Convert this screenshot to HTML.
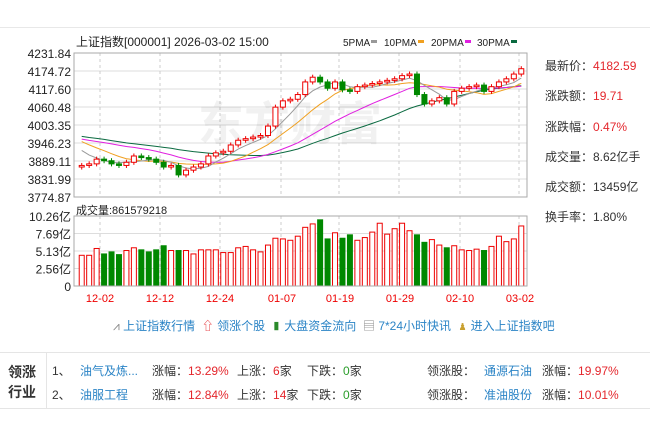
<!DOCTYPE html><html><head><meta charset="utf-8"><style>
body{margin:0;width:650px;height:427px;background:#fff;font-family:"Liberation Sans","Noto Sans CJK SC",sans-serif;overflow:hidden;position:relative}
.a{position:absolute;white-space:nowrap}
.r{color:#e4262c}.g{color:#2a9d2a}.b{color:#2b84c6}
</style></head><body>
<div class="a" style="left:0;top:27px;width:650px;border-top:1px solid #e8e8e8"></div>
<svg id="s" class="a" style="left:0;top:0" width="650" height="340" font-family="Liberation Sans,Noto Sans CJK SC,sans-serif"></svg>
<div class="a" style="left:545px;top:51px;font-size:12px;line-height:30.3px;color:#333">最新价：<span class="r">4182.59</span><br>涨跌额：<span class="r">19.71</span><br>涨跌幅：<span class="r">0.47%</span><br>成交量：8.62亿手<br>成交额：13459亿<br>换手率：1.80%</div>
<div class="a" style="left:113px;top:317px;font-size:12px;color:#2b84c6">
<span style="color:#888">⩘</span> 上证指数行情 &nbsp;<span style="color:#e4262c">⇧</span> 领涨个股 &nbsp;<span style="color:#2a8a2a">▮</span> 大盘资金流向 &nbsp;<span style="color:#888">▤</span> 7*24小时快讯 &nbsp;<span style="color:#c9a030">♟</span> 进入上证指数吧</div>
<div class="a" style="left:0;top:352px;width:650px;height:55px;border-top:1px solid #e5e5e5;border-bottom:1px solid #e5e5e5"></div>
<div class="a" style="left:46px;top:352px;height:56px;border-left:1px solid #e5e5e5"></div>
<div class="a" style="left:8px;top:362px;font-size:14px;font-weight:bold;line-height:20px;color:#333">领涨<br>行业</div>
<div class="a" style="left:52px;top:359px;font-size:12px;line-height:24px;color:#333">
<div><span class="a" style="left:0">1、</span><span class="a b" style="left:28px">油气及炼...</span><span class="a" style="left:100px">涨幅：<span class="r">13.29%</span></span><span class="a" style="left:185px">上涨：<span class="r">6</span>家</span><span class="a" style="left:255px">下跌：<span class="g">0</span>家</span><span class="a" style="left:375px">领涨股：</span><span class="a b" style="left:432px">通源石油</span><span class="a" style="left:490px">涨幅：<span class="r">19.97%</span></span></div>
<div style="position:relative;top:24px"><span class="a" style="left:0">2、</span><span class="a b" style="left:28px">油服工程</span><span class="a" style="left:100px">涨幅：<span class="r">12.84%</span></span><span class="a" style="left:185px">上涨：<span class="r">14</span>家</span><span class="a" style="left:255px">下跌：<span class="g">0</span>家</span><span class="a" style="left:375px">领涨股：</span><span class="a b" style="left:432px">准油股份</span><span class="a" style="left:490px">涨幅：<span class="r">10.01%</span></span></div>
</div>
<script>
var s=document.getElementById('s'),h='';
var L=74,R=527,T=53,B=197;
function py(p){return T+(4231.84-p)/456.97*144}
h+='<text x="76" y="46" font-size="12" fill="#222">上证指数[000001] 2026-03-02 15:00</text>';
h+='<text x="343" y="46" font-size="10" fill="#222">5PMA</text><rect x="371" y="40" width="6" height="3" fill="#999"/>';
h+='<text x="384" y="46" font-size="10" fill="#222">10PMA</text><rect x="418" y="40" width="6" height="3" fill="#f0a020"/>';
h+='<text x="431" y="46" font-size="10" fill="#222">20PMA</text><rect x="465" y="40" width="6" height="3" fill="#e020e0"/>';
h+='<text x="477" y="46" font-size="10" fill="#222">30PMA</text><rect x="511" y="40" width="6" height="3" fill="#0a6a40"/>';
var labs=['4231.84','4174.72','4117.60','4060.48','4003.35','3946.23','3889.11','3831.99','3774.87'];
for(var i=0;i<9;i++){var y=T+i*18;h+='<text x="71" y="'+(y+5)+'" font-size="12" text-anchor="end" fill="#222">'+labs[i]+'</text>';if(i>0&&i<8)h+='<line x1="'+L+'" x2="'+R+'" y1="'+y+'" y2="'+y+'" stroke="#ddd"/>';}
var vx=[100,160,220,281,339,399,460,519];
vx.forEach(function(x){h+='<line x1="'+x+'" x2="'+x+'" y1="'+T+'" y2="'+B+'" stroke="#ccc" stroke-dasharray="3,3"/>';h+='<line x1="'+x+'" x2="'+x+'" y1="216" y2="286" stroke="#ccc" stroke-dasharray="3,3"/>';});
h+='<text x="290" y="140" font-size="46" font-weight="bold" fill="#000" opacity="0.05" text-anchor="middle">东方财富</text>';
var c=[3875,3880,3895,3890,3880,3875,3885,3905,3900,3895,3885,3870,3875,3845,3860,3870,3880,3905,3915,3920,3940,3955,3960,3965,3970,4000,4060,4080,4085,4100,4140,4155,4140,4120,4140,4115,4110,4125,4130,4135,4140,4145,4150,4160,4165,4100,4070,4080,4090,4070,4110,4120,4125,4130,4110,4125,4140,4150,4165,4182];
var pre=[];for(var i=0;i<30;i++)pre.push(3975+Math.sin(i/3)*15-(i>22?(i-22)*8:0));
var all=pre.concat(c),n=c.length,dx=(R-L-6)/n;
function ma(k,i){var t=0;for(var j=0;j<k;j++)t+=all[30+i-j];return t/k}
var cols={5:'#999',10:'#f0a020',20:'#e020e0',30:'#0a6a40'};
[30,20,10,5].forEach(function(k){var p='';for(var i=0;i<n;i++){p+=(i?'L':'M')+(L+4+i*dx+dx/2).toFixed(1)+','+py(ma(k,i)).toFixed(1)}h+='<path d="'+p+'" fill="none" stroke="'+cols[k]+'" stroke-width="1"/>';});
for(var i=0;i<n;i++){var cl=c[i],op=i?all[29+i]:3870;var x=L+4+i*dx+dx/2;var up=cl>=op;var hi=Math.max(cl,op)+8,lo=Math.min(cl,op)-8;var col=up?'#e00':'#080';
h+='<line x1="'+x+'" x2="'+x+'" y1="'+py(hi)+'" y2="'+py(lo)+'" stroke="'+col+'"/>';
var y1=py(Math.max(cl,op)),hh=Math.max(1,py(Math.min(cl,op))-y1);
h+='<rect x="'+(x-2.5)+'" y="'+y1+'" width="5" height="'+hh+'" fill="'+(up?'#fff':col)+'" stroke="'+col+'"/>';}
h+='<rect x="'+L+'" y="'+T+'" width="'+(R-L)+'" height="'+(B-T)+'" fill="none" stroke="#aaa"/>';
h+='<text x="76" y="214" font-size="11" fill="#222">成交量:861579218</text>';
var vl=['10.26亿','7.69亿','5.13亿','2.56亿','0'];
for(var i=0;i<5;i++){var y=216+i*17.5;h+='<text x="71" y="'+(y+5)+'" font-size="12" text-anchor="end" fill="#222">'+vl[i]+'</text>';if(i>0&&i<4)h+='<line x1="'+L+'" x2="'+R+'" y1="'+y+'" y2="'+y+'" stroke="#ddd"/>';}
var v=[4.5,4.5,5.5,4.7,5,4.6,5.2,5.6,5.3,5,5.3,5.9,5.2,5.2,5.2,4.7,5.3,5.3,5.3,4.9,4.9,5.6,5.8,5.3,5,6,7,6.9,6.7,7.3,8.6,9.1,9.7,6.9,7.8,7,7.5,6.7,7.1,7.9,9.2,7.6,8.4,9.2,8.1,7.5,6.4,6.8,6,5.6,5.9,5.3,5.2,5.4,5.2,5.8,7.3,6.5,6.9,8.8];
for(var i=0;i<n;i++){var up=i?c[i]>=c[i-1]:true;var x=L+4+i*dx+dx/2;var hh=v[i]/10.26*70;var col=up?'#e00':'#080';h+='<rect x="'+(x-2.5)+'" y="'+(286-hh)+'" width="5" height="'+hh+'" fill="'+(up?'#fff':col)+'" stroke="'+col+'"/>';}
h+='<rect x="'+L+'" y="216" width="'+(R-L)+'" height="70" fill="none" stroke="#aaa"/>';
var d=['12-02','12-12','12-24','01-07','01-19','01-29','02-10','03-02'],dxs=[100,160,220,282,340,400,460,520];
for(var i=0;i<8;i++)h+='<text x="'+dxs[i]+'" y="302" font-size="11" text-anchor="middle" fill="#e00">'+d[i]+'</text>';
s.innerHTML=h;
</script>
</body></html>
